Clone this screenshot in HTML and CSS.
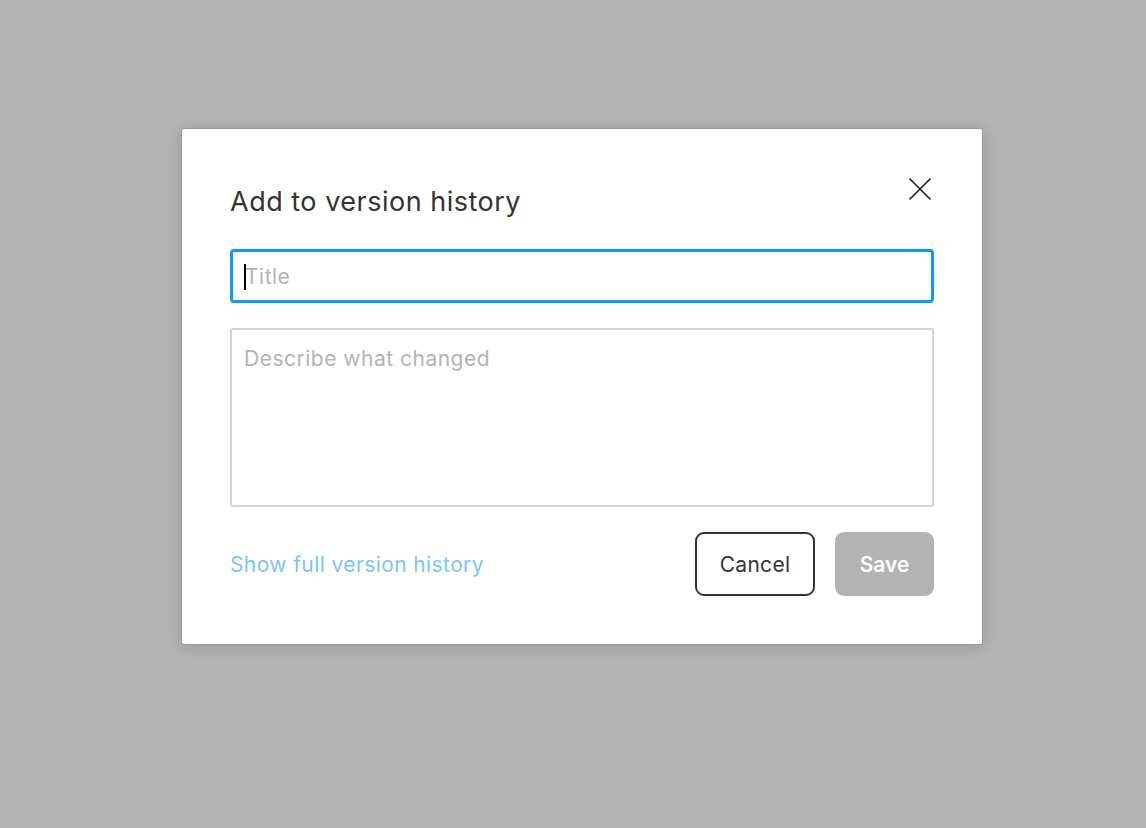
FILE: index.html
```html
<!DOCTYPE html>
<html lang="en">
<head>
<meta charset="utf-8">
<title>Add to version history</title>
<link rel="stylesheet" href="styles.css">
</head>
<body>
<div class="page">
  <div class="dialog">
    <div class="header">
      <h1 class="title">Add to version history</h1>
      <button class="close" aria-label="Close">
        <svg width="24" height="24" viewBox="0 0 24 24"><path d="M1.5 1.5 L22.5 22.5 M22.5 1.5 L1.5 22.5" stroke="#1a1a1a" stroke-width="1.6" fill="none"/></svg>
      </button>
    </div>
    <div class="field-title"><span class="caret"></span><span class="ph">Title</span></div>
    <div class="field-desc"><span class="ph">Describe what changed</span></div>
    <div class="footer">
      <a class="link">Show full version history</a>
      <div class="actions">
        <button class="btn cancel">Cancel</button>
        <button class="btn save">Save</button>
      </div>
    </div>
  </div>
</div>
</body>
</html>
```
FILE: styles.css
```css
html, body {
  margin: 0;
  padding: 0;
  background: #b3b3b3;
  height: 100%;
  font-family: Inter, "Noto Sans", sans-serif;
}
.page {
  padding: 128px 0 0 181px;
}
.dialog {
  box-sizing: border-box;
  width: 802px;
  height: 517px;
  background: #fff;
  border: 1px solid #9a9a9a;
  border-radius: 3px;
  box-shadow: 0 2px 14px rgba(0,0,0,0.15);
  padding: 48px 48px 0 48px;
  display: flex;
  flex-direction: column;
}
.header {
  display: flex;
  justify-content: space-between;
  align-items: flex-start;
  height: 72px;
}
.title {
  margin: 0;
  padding-top: 9px;
  font-size: 27px;
  font-weight: 400;
  color: #333;
  line-height: 32px;
  letter-spacing: 0.5px;
}
.close {
  border: 0;
  background: none;
  padding: 0;
  margin: 0 2px 0 0;
  width: 24px;
  height: 24px;
  cursor: pointer;
}
.close svg { display: block; }
.field-title {
  box-sizing: border-box;
  height: 54px;
  border: 3px solid #0d99ff;
  border-radius: 4px;
  display: flex;
  align-items: center;
  padding-left: 11px;
}
.caret {
  width: 2px;
  height: 26px;
  background: #000;
  margin-top: 1px;
}
.ph {
  color: #b3b3b3;
  font-size: 21px;
  letter-spacing: 0.5px;
}
.field-title .ph { margin-left: -1px; }
.field-desc {
  box-sizing: border-box;
  margin-top: 25px;
  height: 179px;
  border: 2px solid #d4d4d4;
  border-radius: 3px;
  padding: 16px 12px 15px;
  line-height: 26px;
}
.footer {
  margin-top: 25px;
  display: flex;
  justify-content: space-between;
  align-items: center;
}
.link {
  color: #7cc4f8;
  font-size: 21px;
  letter-spacing: 0.4px;
  cursor: pointer;
}
.actions {
  display: flex;
  gap: 20px;
}
.btn {
  box-sizing: border-box;
  height: 64px;
  border-radius: 9px;
  font-family: Inter, "Noto Sans", sans-serif;
  font-size: 21px;
  cursor: pointer;
}
.cancel {
  width: 120px;
  background: #fff;
  border: 2px solid #333;
  color: #333;
  letter-spacing: 0.3px;
}
.save {
  width: 99px;
  background: #b3b3b3;
  border: 0;
  color: #fff;
  font-weight: 600;
}
```
